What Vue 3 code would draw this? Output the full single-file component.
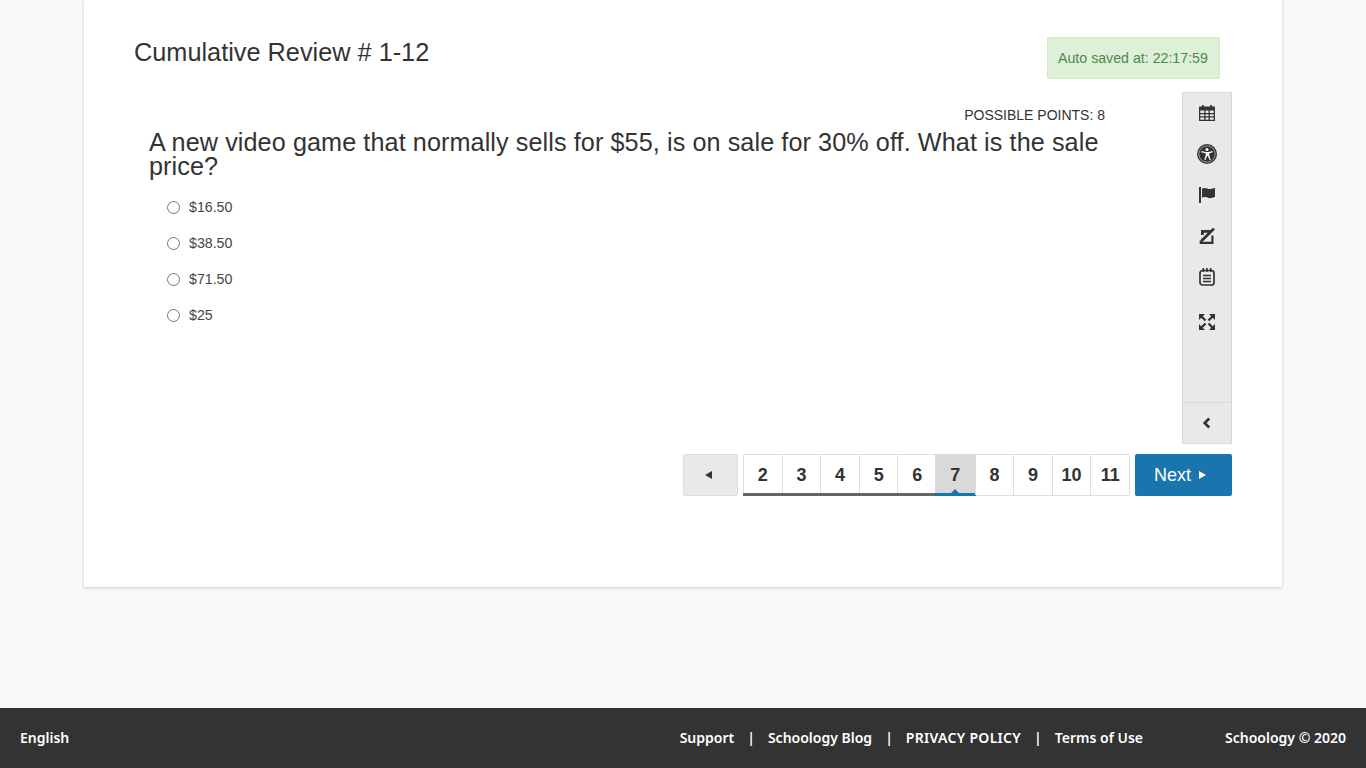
<template>
  <div class="page">
    <main class="card">
      <header class="head">
        <h1 class="title">Cumulative Review # 1-12</h1>
        <div class="saved">Auto saved at: 22:17:59</div>
      </header>

      <div class="content">
        <section class="question">
          <div class="points">POSSIBLE POINTS: 8</div>
          <p class="prompt">A new video game that normally sells for $55, is on sale for 30% off. What is the sale price?</p>
          <label v-for="choice in choices" :key="choice" class="choice">
            <input type="radio" name="answer" />
            <span>{{ choice }}</span>
          </label>
        </section>

        <aside class="tools">
          <div class="tool-list">
            <button class="tool">
              <svg width="16" height="16" viewBox="0 0 16 16"><path fill="#333" d="M3 0h1.800v1.500h6.400V0H13v1.500h3V16H0V1.500h3zM1.300 5.500v2.600h3.900V5.500zm5.200 0v2.600h3V5.500zm4.300 0v2.600h3.900V5.500zM1.300 9.200v2.100h3.900V9.200zm5.200 0v2.100h3V9.200zm4.300 0v2.100h3.900V9.200zM1.300 12.400v2.300h3.900v-2.300zm5.200 0v2.300h3v-2.300zm4.300 0v2.300h3.900v-2.300z"/></svg>
            </button>
            <button class="tool">
              <svg width="20" height="20" viewBox="0 0 20 20"><circle cx="10" cy="10" r="10" fill="#333"/><circle cx="10" cy="10" r="8.200" fill="none" stroke="#ccc" stroke-width=".7"/><circle cx="10" cy="5.500" r="1.500" fill="#fff"/><path fill="#fff" d="M4.500 7l4 1.100h3l4-1.100.3 1.200-3.500 1.100v2.100l1.500 4.300-1.200.4-1.700-4h-.8l-1.700 4-1.200-.4 1.500-4.300V9.300L4.200 8.200z"/></svg>
            </button>
            <button class="tool">
              <svg width="16" height="16" viewBox="0 0 16 16"><path fill="#333" d="M0 0h2v16H0zM3 1.500c2-.8 3.600-.8 5.200 0 1.800.7 3.400.7 5 0L16 1v9l-2.500.8c-1.800.6-3.500.5-5.300-.3-1.700-.7-3.400-.6-5.200.2z"/></svg>
            </button>
            <button class="tool">
              <svg width="16" height="16" viewBox="0 0 16 16"><g fill="none" stroke="#333"><path stroke-width="2.800" d="M3.400 7V3.400h8.300M15 .6L2.400 13"/><path stroke-width="2.200" d="M1.800 12.500v2.300h11.600V7.500"/></g></svg>
            </button>
            <button class="tool">
              <svg width="16" height="18" viewBox="0 0 16 18"><rect x="1" y="2.500" width="14" height="14.500" rx="2.500" fill="none" stroke="#333" stroke-width="1.700"/><path stroke="#333" stroke-width="1.600" d="M4.300 0v4M8 0v4M11.700 0v4M4 7.500h8M4 10.500h8M4 13.500h8"/></svg>
            </button>
            <button class="tool">
              <svg width="16" height="16" viewBox="0 0 16 16"><g fill="#333"><path d="M0 0h6L0 6zM16 0v6l-6-6zM0 16v-6l6 6zM16 16h-6l6-6z"/></g><path stroke="#333" stroke-width="2.400" d="M2.500 2.500l4 4M13.500 2.500l-4 4M2.500 13.500l4-4M13.500 13.500l-4-4"/></svg>
            </button>
          </div>
          <button class="collapse">
            <svg width="10" height="12" viewBox="0 0 10 12"><path fill="none" stroke="#333" stroke-width="2.600" d="M7.200 1.500L2.700 6l4.500 4.500"/></svg>
          </button>
        </aside>
      </div>

      <nav class="pager">
        <button class="prev"><span class="arrow-left"></span></button>
        <div class="pages">
          <button
            v-for="n in pages"
            :key="n"
            class="page-btn"
            :class="{ current: n === 7, done: n < 7 }"
          >{{ n }}</button>
        </div>
        <button class="next">Next<span class="arrow-right"></span></button>
      </nav>
    </main>

    <footer class="footer">
      <span>English</span>
      <div class="links">
        <template v-for="(link, i) in links" :key="link">
          <span v-if="i > 0" class="sep">|</span>
          <a>{{ link }}</a>
        </template>
      </div>
      <span>Schoology © 2020</span>
    </footer>
  </div>
</template>

<script setup>
const choices = ['$16.50', '$38.50', '$71.50', '$25']
const pages = [2, 3, 4, 5, 6, 7, 8, 9, 10, 11]
const links = ['Support', 'Schoology Blog', 'PRIVACY POLICY', 'Terms of Use']
</script>

<style>
body {
  background: #faf9f7;
}
</style>

<style scoped>
.page {
  min-height: 768px;
  display: flex;
  flex-direction: column;
  font-family: "Liberation Sans", Arial, sans-serif;
  color: #333;
}

.card {
  width: 1098px;
  height: 587px;
  margin: 0 auto 121px;
  padding: 0 50px;
  background: #fff;
  box-shadow: 0 1px 3px rgba(0, 0, 0, 0.2);
}

.head {
  height: 92px;
  display: flex;
  justify-content: space-between;
  align-items: flex-start;
}

.title {
  margin: 39px 0 0;
  font-size: 25.3px;
  line-height: 27px;
  font-weight: 400;
  color: #333;
}

.saved {
  width: 151px;
  height: 40px;
  margin: 37px 12px 0 0;
  padding: 0 10px;
  display: flex;
  align-items: center;
  border: 1px solid #d6e9c6;
  border-radius: 2px;
  background: #dff0d8;
  color: #4a8a4b;
  font-size: 14.2px;
  white-space: nowrap;
}

.content {
  display: flex;
  justify-content: space-between;
  height: 352px;
}

.question {
  width: 956px;
  padding: 15px 0 0 15px;
}

.points {
  text-align: right;
  font-size: 14px;
  line-height: 16px;
  color: #333;
}

.prompt {
  margin: 7px 0 11px;
  font-size: 25.2px;
  line-height: 24px;
  letter-spacing: 0.09px;
}

.choice {
  height: 36px;
  display: flex;
  align-items: center;
  padding-left: 18px;
  font-size: 14.2px;
  color: #444;
}

.choice input {
  width: 13px;
  height: 13px;
  margin: 0 9px 0 0;
}

.tools {
  width: 48px;
  display: flex;
  flex-direction: column;
  justify-content: space-between;
  border: 1px solid #d8d8d8;
  background: #e9e9e9;
}

.tool-list {
  display: flex;
  flex-direction: column;
  margin-top: -1px;
}

.tool,
.collapse {
  display: flex;
  align-items: center;
  justify-content: center;
  width: 48px;
  padding: 0;
  border: 0;
  background: none;
}

.tool {
  height: 41px;
}

.tool:last-child {
  margin-top: 4px;
}

.collapse {
  height: 40px;
  border-top: 1px solid #d8d8d8;
  box-sizing: content-box;
}

.pager {
  display: flex;
  justify-content: flex-end;
  gap: 5px;
  margin-top: 10px;
  height: 42px;
}

.prev {
  width: 55px;
  padding: 0;
  border: 1px solid #ddd;
  border-radius: 2px;
  background: #e9e9e9;
  display: flex;
  align-items: center;
  justify-content: center;
}

.arrow-left {
  border-style: solid;
  border-width: 4px 7px 4px 0;
  border-color: transparent #333 transparent transparent;
  margin-right: 4px;
}

.pages {
  display: flex;
  border: 1px solid #ddd;
  border-left: 0;
  border-radius: 2px;
  height: 40px;
}

.page-btn {
  position: relative;
  width: 38.6px;
  height: 40px;
  padding: 0;
  border: 0;
  border-left: 1px solid #ddd;
  background: #fff;
  font: 700 18px "Liberation Sans", Arial, sans-serif;
  color: #333;
}

.page-btn.done::after,
.page-btn.current::after {
  content: "";
  position: absolute;
  left: -1px;
  right: 0;
  bottom: -1px;
  height: 3px;
  background: #666;
}

.page-btn.current {
  background: #d9d9d9;
  border-left: 0;
  box-shadow: -1px 0 #d9d9d9;
}

.page-btn.current::after {
  background: #1a75ae;
  left: -1px;
  right: -1px;
}

.page-btn.current::before {
  content: "";
  position: absolute;
  left: 50%;
  bottom: 2px;
  margin-left: -4px;
  border-style: solid;
  border-width: 0 4px 4px;
  border-color: transparent transparent #1a75ae;
}

.next {
  width: 97px;
  padding: 0 7px 0 0;
  border: 0;
  border-radius: 2px;
  background: #1a75ae;
  color: #fff;
  font: 400 18px "Liberation Sans", Arial, sans-serif;
  display: flex;
  align-items: center;
  justify-content: center;
}

.arrow-right {
  border-style: solid;
  border-width: 4px 0 4px 7px;
  border-color: transparent transparent transparent #fff;
  margin-left: 8px;
}

.footer {
  height: 58px;
  padding: 0 20px 2px;
  display: flex;
  align-items: center;
  background: #333;
  color: #fff;
  font: 600 14px "Noto Sans", sans-serif;
  white-space: nowrap;
}

.links {
  display: flex;
  margin-left: auto;
  margin-right: 82px;
}

.links a:nth-of-type(3) {
  letter-spacing: 0.3px;
}

.sep {
  margin: 0 13px;
}
</style>
